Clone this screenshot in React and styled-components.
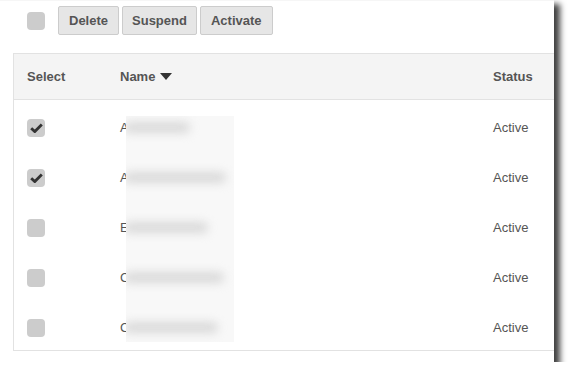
// User list with bulk actions

import React from 'react';
import styled, { createGlobalStyle } from 'styled-components';

const GlobalStyle = createGlobalStyle`
  html, body {
    margin: 0;
    background: #fff;
  }
  body {
    font-family: "Liberation Sans", Arial, sans-serif;
    color: #555;
  }
`;

// Styled components
const Frame = styled.div`
  box-sizing: border-box;
  width: 554px;
  height: 362px;
  padding-top: 6px;
  background: #fff;
  border-top: 1px solid #f6f6f6;
  box-shadow: 5px 5px 6px 1px rgba(0, 0, 0, 0.75);
`;

const Toolbar = styled.div`
  display: flex;
  align-items: center;
  height: 29px;
  margin-left: 27px;
  margin-top: -1px;
`;

const Buttons = styled.div`
  display: flex;
  gap: 3px;
  margin-left: 13px;
`;

const Button = styled.button`
  box-sizing: border-box;
  height: 29px;
  padding: 0 ${p => p.$pad || 10}px;
  border: 1px solid #ccc;
  border-radius: 2px;
  background: #e6e6e6;
  color: #555;
  font-family: "Liberation Sans", Arial, sans-serif;
  font-size: 13px;
  font-weight: bold;
`;

const Box = styled.span`
  display: inline-flex;
  align-items: center;
  justify-content: center;
  width: 18px;
  height: 18px;
  border-radius: 4px;
  background: #ccc;
`;

const Table = styled.div`
  position: relative;
  margin: 18px 0 0 13px;
  border-left: 1px solid #e2e2e2;
  border-bottom: 1px solid #e2e2e2;
`;

const Row = styled.div`
  display: grid;
  grid-template-columns: 106px 1fr 61px;
  align-items: center;
  box-sizing: border-box;
  height: 50px;
  padding-top: 5px;
  font-size: 13px;
`;

const HeadRow = styled(Row)`
  height: 47px;
  padding-top: 0;
  background: #f4f4f4;
  border-top: 1px solid #e2e2e2;
  border-bottom: 1px solid #e2e2e2;
  font-weight: bold;
`;

const Cell = styled.div`
  display: flex;
  align-items: center;
  padding-left: ${p => p.$pl || 0}px;
  white-space: nowrap;
`;

const Caret = styled.span`
  width: 0;
  height: 0;
  margin-left: 5px;
  margin-top: -1px;
  border-left: 6px solid transparent;
  border-right: 6px solid transparent;
  border-top: 7px solid #333;
`;

const Redact = styled.div`
  position: absolute;
  left: 112px;
  top: 63px;
  width: 108px;
  height: 226px;
  background: #f8f8f8;
  overflow: hidden;
`;

const Smudge = styled.div`
  position: absolute;
  left: -2px;
  height: 11px;
  border-radius: 6px;
  background: #d9d9d9;
  filter: blur(5px);
`;

const Check = () => (
  <svg width="13" height="10" viewBox="0 0 13 10">
    <path d="M1.2 5.2 L4.8 8.6 L11.8 1.6" fill="none" stroke="#333" strokeWidth="2.8" />
  </svg>
);

const users = [
  { initial: 'A', checked: true, blur: 66 },
  { initial: 'A', checked: true, blur: 102 },
  { initial: 'E', checked: false, blur: 84 },
  { initial: 'C', checked: false, blur: 100 },
  { initial: 'C', checked: false, blur: 94 },
];

const App = () => (
  <>
    <GlobalStyle />
    <Frame>
      <Toolbar>
        <Box />
        <Buttons>
          <Button $pad={10}>Delete</Button>
          <Button $pad={9}>Suspend</Button>
          <Button $pad={10}>Activate</Button>
        </Buttons>
      </Toolbar>
      <Table>
        <HeadRow>
          <Cell $pl={13}>Select</Cell>
          <Cell>Name<Caret /></Cell>
          <Cell>Status</Cell>
        </HeadRow>
        {users.map((u, i) => (
          <Row key={i}>
            <Cell $pl={13}><Box>{u.checked && <Check />}</Box></Cell>
            <Cell>{u.initial}</Cell>
            <Cell>Active</Cell>
          </Row>
        ))}
        <Redact>
          {users.map((u, i) => (
            <Smudge key={i} style={{ top: 6 + i * 50, width: u.blur }} />
          ))}
        </Redact>
      </Table>
    </Frame>
  </>
);

export default App;
